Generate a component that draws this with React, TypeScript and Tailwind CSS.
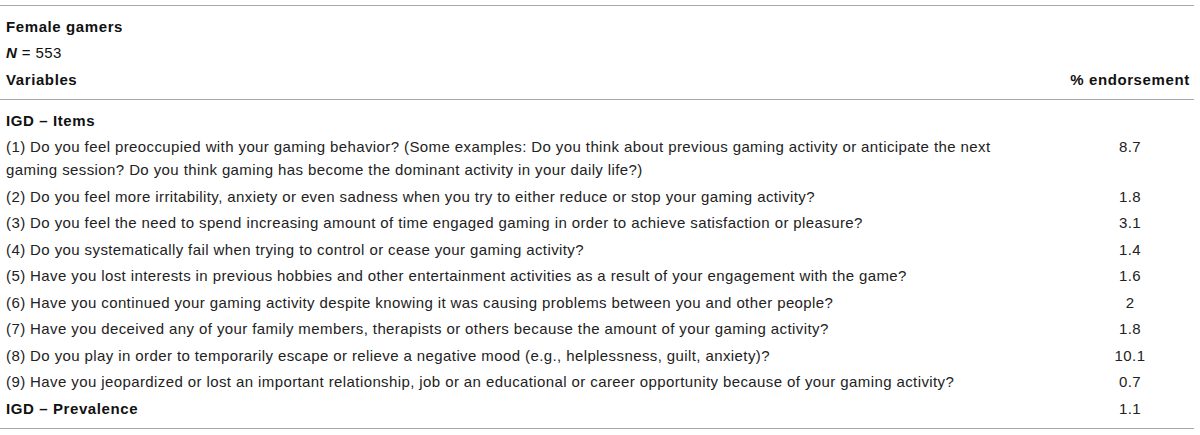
import React from 'react';

type Row = { label: string; value: string; bold?: boolean };

const rows: Row[] = [
  { label: 'IGD – Items', value: '', bold: true },
  {
    label:
      '(1) Do you feel preoccupied with your gaming behavior? (Some examples: Do you think about previous gaming activity or anticipate the next gaming session? Do you think gaming has become the dominant activity in your daily life?)',
    value: '8.7',
  },
  {
    label:
      '(2) Do you feel more irritability, anxiety or even sadness when you try to either reduce or stop your gaming activity?',
    value: '1.8',
  },
  {
    label:
      '(3) Do you feel the need to spend increasing amount of time engaged gaming in order to achieve satisfaction or pleasure?',
    value: '3.1',
  },
  {
    label: '(4) Do you systematically fail when trying to control or cease your gaming activity?',
    value: '1.4',
  },
  {
    label:
      '(5) Have you lost interests in previous hobbies and other entertainment activities as a result of your engagement with the game?',
    value: '1.6',
  },
  {
    label:
      '(6) Have you continued your gaming activity despite knowing it was causing problems between you and other people?',
    value: '2',
  },
  {
    label:
      '(7) Have you deceived any of your family members, therapists or others because the amount of your gaming activity?',
    value: '1.8',
  },
  {
    label:
      '(8) Do you play in order to temporarily escape or relieve a negative mood (e.g., helplessness, guilt, anxiety)?',
    value: '10.1',
  },
  {
    label:
      '(9) Have you jeopardized or lost an important relationship, job or an educational or career opportunity because of your gaming activity?',
    value: '0.7',
  },
  { label: 'IGD – Prevalence', value: '1.1', bold: true },
];

const cell = 'leading-[23px] py-[1.75px]';

const App: React.FC = () => {
  return (
    <div
      className="w-[1200px] h-[435px] bg-white text-[15px] tracking-[0.4px] text-[#222]"
      style={{ fontFamily: '"Liberation Sans", Arial, sans-serif' }}
    >
      <div className="w-[1194px] pt-[5px]">
        <div className="border-t border-[#a8a8a8] pt-[7px] pb-[6.5px] border-b">
          <div className={`${cell} pl-[6px] font-bold tracking-[0.6px] text-[#111]`}>Female gamers</div>
          <div className={`${cell} pl-[6px] text-[#111]`}>
            <i className="font-bold">N</i> = 553
          </div>
          <div className={`flex ${cell} font-bold tracking-[0.6px] text-[#111]`}>
            <span className="flex-1 pl-[6px]">Variables</span>
            <span className="w-[128px] text-center">% endorsement</span>
          </div>
        </div>
        <div className="pt-[7px] pb-[6px] border-b border-[#a8a8a8]">
          {rows.map((r, i) => (
            <div key={i} className={`flex ${cell}`}>
              <div
                className={`flex-1 pl-[6px] pr-[50px] ${r.bold ? 'font-bold tracking-[0.6px] text-[#111]' : ''}`}
              >
                {r.label}
              </div>
              <div className="w-[128px] text-center">{r.value}</div>
            </div>
          ))}
        </div>
      </div>
    </div>
  );
};

export default App;
